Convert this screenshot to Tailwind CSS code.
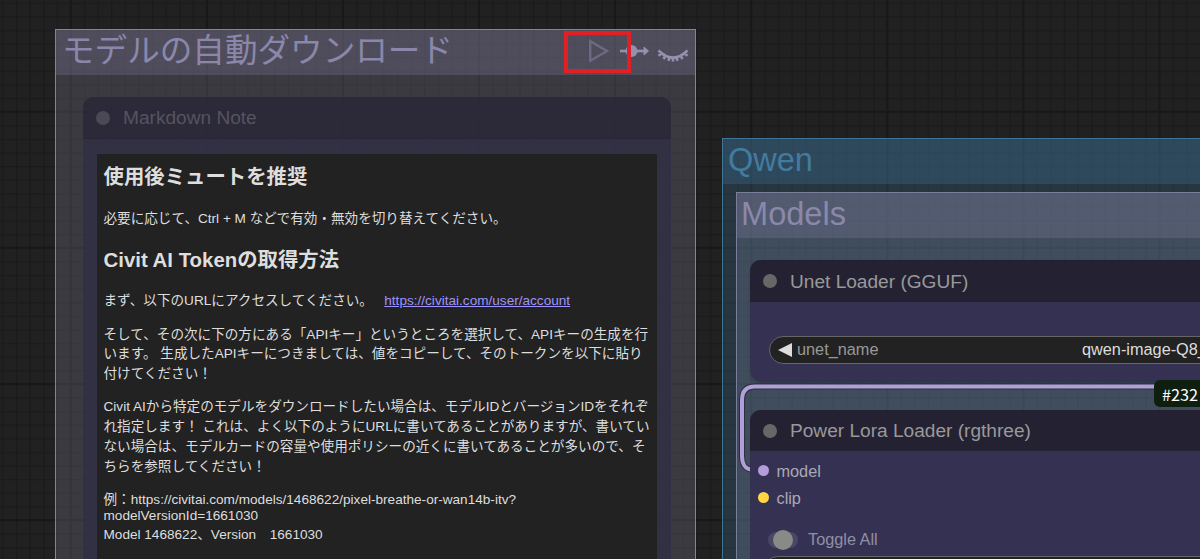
<!DOCTYPE html>
<html lang="ja">
<head>
    <meta charset="UTF-8">
    <meta name="viewport" content="width=device-width, initial-scale=1.0">
    <title>ComfyUI</title>
    <script src="https://cdn.jsdelivr.net/npm/@tailwindcss/browser@4"></script>
    <style>
        body {
            font-family: 'Liberation Sans', 'Noto Sans CJK JP', sans-serif;
        }
    </style>
</head>
<body class="bg-[#212121] overflow-hidden">
    <main class="relative w-[1200px] h-[559px] overflow-hidden">
        <!-- canvas grid -->
        <svg class="absolute inset-0" width="1200" height="559">
            <defs>
                <pattern id="minor" x="70.2" y="111.5" width="13.61" height="13.61" patternUnits="userSpaceOnUse">
                    <path d="M.7 0V13.61M0 .7H13.61" stroke="#1b1b1b" stroke-width="1.4"/>
                </pattern>
                <pattern id="major" x="69.7" y="110.7" width="136.1" height="136.1" patternUnits="userSpaceOnUse">
                    <path d="M1 0V136.1M0 1H136.1" stroke="#181818" stroke-width="2"/>
                </pattern>
            </defs>
            <rect width="1200" height="559" fill="url(#minor)"/>
            <rect width="1200" height="559" fill="url(#major)"/>
        </svg>

        <!-- download group -->
        <section class="absolute left-[55px] top-[29px] w-[641px] h-[560px] border-[1.5px] border-[#8582a0] bg-[#8888a0]/25">
            <header class="h-[45px] flex items-center justify-between pl-[6px] pr-[4px] bg-[#8e88b0]/25">
                <h1 class="text-[32.600px] leading-[44px] pb-[4px] text-[#8b87ab] whitespace-nowrap">モデルの自動ダウンロード</h1>
                <svg class="mb-[5px]" width="104" height="24" viewBox="0 0 104 24" fill="none">
                    <path d="M3.200 3.200V22.800L20 13Z" stroke="#6c6983" stroke-width="2.400"/>
                    <path d="M33 13H60" stroke="#9390b0" stroke-width="2.600"/>
                    <circle cx="44.500" cy="13" r="6" fill="#9390b0"/>
                    <path d="M57 9L61.500 13L57 17Z" fill="#9390b0" stroke="#9390b0" stroke-linejoin="round"/>
                    <path d="M71.500 12.500Q86 27 100.500 12.500M74.500 15.200L71.500 17.800M78.500 17.500L76.500 21M82.500 19L81.500 22.800M86 19.500V23.500M89.500 19L90.500 22.800M93.500 17.500L95.500 21M97.500 15.200L100.500 17.800" stroke="#9390b0" stroke-width="2.600"/>
                </svg>
            </header>
        </section>

        <article class="absolute left-[83px] top-[97px] w-[588px] h-[480px] rounded-t-[11px] bg-[#322f43]/95 overflow-hidden">
            <header class="h-[42px] flex items-center gap-[13px] pl-[13px] bg-[#2b2939]/90 border-b border-[#282635]">
                <span class="size-[14px] rounded-full bg-[#4a4954]"></span>
                <h2 class="text-[19.100px] leading-none text-[#55545f]">Markdown Note</h2>
            </header>
            <div class="mt-[15px] ml-[13.500px] w-[560.500px] h-[420px] bg-[#222222] pt-[9.400px] px-[7px] text-[13.600px] leading-[19.700px] text-[#dedede] whitespace-nowrap">
                <h2 class="text-[20.400px] leading-[29.500px] font-bold">使用後ミュートを推奨</h2>
                <p class="mt-[16.200px]">必要に応じて、Ctrl + M などで有効・無効を切り替えてください。</p>
                <h2 class="mt-[16.900px] text-[20.400px] leading-[29.500px] font-bold">Civit AI Tokenの取得方法</h2>
                <p class="mt-[16.300px]">まず、以下のURLにアクセスしてください。 &nbsp;&nbsp;<a href="#" class="underline text-[#9f93ff]">https://civitai.com/user/account</a></p>
                <p class="mt-[13.600px]">そして、その次に下の方にある「APIキー」というところを選択して、APIキーの生成を行<br>います。 生成したAPIキーにつきましては、値をコピーして、そのトークンを以下に貼り<br>付けてください！</p>
                <p class="mt-[13.600px]">Civit AIから特定のモデルをダウンロードしたい場合は、モデルIDとバージョンIDをそれぞ<br>れ指定します！ これは、よく以下のようにURLに書いてあることがありますが、書いてい<br>ない場合は、モデルカードの容量や使用ポリシーの近くに書いてあることが多いので、そ<br>ちらを参照してください！</p>
                <p class="mt-[12px] leading-[normal]">例：https://civitai.com/models/1468622/pixel-breathe-or-wan14b-itv?<br>modelVersionId=1661030<br>Model 1468622、Version　1661030</p>
            </div>
        </article>

        <!-- highlight -->
        <div class="absolute left-[564px] top-[31px] w-[67px] h-[42px] border-4 border-[#e02024]"></div>

        <!-- Qwen group -->
        <section class="absolute left-[722px] top-[138px] w-[520px] h-[450px] border-[1.5px] border-[#3f7595] bg-[#3f789e]/25">
            <header class="h-[45px] flex items-center pl-[5px] bg-[#3f789e]/30">
                <h1 class="text-[32.500px] leading-none pb-[3px] text-[#437b9f]">Qwen</h1>
            </header>
        </section>
        <section class="absolute left-[736px] top-[192px] w-[500px] h-[400px] border-[1.5px] border-[#7c7f9c] bg-[#7f87a5]/28">
            <header class="h-[45px] flex items-center pl-[4px] bg-[#8a86aa]/25">
                <h1 class="text-[32.600px] leading-none pb-[3px] text-[#8b88ac]">Models</h1>
            </header>
        </section>

        <article class="absolute left-[750px] top-[260px] w-[480px] h-[121px] rounded-[11px] bg-[#353153] overflow-hidden shadow-[2px_3px_4px_rgba(0,0,0,.3)]">
            <header class="h-[42px] flex items-center gap-[13px] pl-[13px] bg-[#242232]">
                <span class="size-[14px] rounded-full bg-[#676767]"></span>
                <h2 class="text-[19.100px] leading-none pt-px text-[#999999]">Unet Loader (GGUF)</h2>
            </header>
            <div class="mt-[34px] ml-[19px] w-[480px] h-[28px] flex items-center rounded-full border border-[#666666] bg-[#222222] pl-[8px] text-[16.300px] leading-none whitespace-nowrap">
                <svg width="14" height="14" viewBox="0 0 14 14"><path d="M0 7L14 0V14Z" fill="#dddddd"/></svg>
                <span class="ml-[5px] w-[285px] pb-px text-[#999999]">unet_name</span>
                <span class="pb-px text-[#dddddd]">qwen-image-Q8_</span>
            </div>
        </article>

        <!-- model link -->
        <svg class="absolute inset-0" width="1200" height="559" fill="none">
            <path d="M752 469.500C745 469.500 742 463 742 456V400Q742 386.500 755 386.500H1200" stroke="#28323d" stroke-width="6"/>
            <path d="M752 469.500C745 469.500 742 463 742 456V400Q742 386.500 755 386.500H1200" stroke="#b39ddb" stroke-width="4"/>
        </svg>

        <article class="absolute left-[750px] top-[410px] w-[480px] h-[180px] rounded-[11px] bg-[#353153] overflow-hidden">
            <header class="h-[41px] flex items-center gap-[13px] pl-[13px] bg-[#242232]">
                <span class="size-[14px] rounded-full bg-[#676767]"></span>
                <h2 class="text-[19.100px] leading-none text-[#999999]">Power Lora Loader (rgthree)</h2>
            </header>
            <ul class="pt-[6px] pl-[7.500px] text-[16.300px] leading-[27px] text-[#aaa9b4]">
                <li class="flex items-center gap-[8px]"><span class="size-[11px] rounded-full bg-[#b39ddb]"></span><span class="pt-px -mb-px">model</span></li>
                <li class="flex items-center gap-[8px]"><span class="size-[11px] rounded-full bg-[#ffd540]"></span><span class="pt-px -mb-px">clip</span></li>
            </ul>
            <div class="mt-[17px] ml-[18px] h-[24px] flex items-center gap-[10px] text-[16.300px] leading-none text-[#918fa3]">
                <span class="w-[30px] h-[16px] flex items-center justify-center rounded-full bg-[#4a4765]"><span class="size-[20px] shrink-0 rounded-full bg-[#888a87]"></span></span>
                <span class="pb-px">Toggle All</span>
            </div>
            <div class="mt-[4px] ml-[14px] w-[480px] h-[27px] rounded-full border border-[#666666] bg-[#222222]"></div>
        </article>

        <!-- node id badge -->
        <div class="absolute left-[1154px] top-[380px] w-[60px] h-[27px] flex items-center rounded-[6px] bg-[#0f1f0f] pl-[8px] pt-[2px] text-[16.300px] leading-none text-white font-['Noto_Sans_CJK_JP',sans-serif]">#232</div>
    </main>
</body>
</html>
